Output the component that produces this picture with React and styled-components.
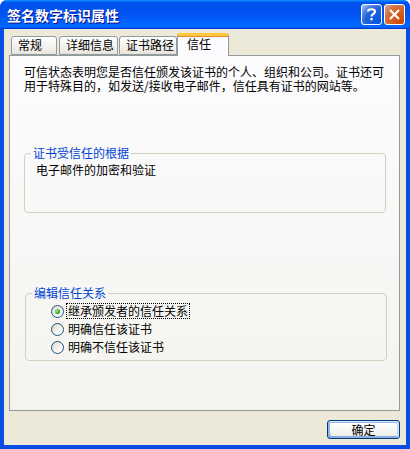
import React from "react";
import styled, { createGlobalStyle } from "styled-components";

const GlobalStyle = createGlobalStyle`
  html, body {
    margin: 0;
    padding: 0;
    background: #ffffff;
  }
  body {
    font-family: "Noto Sans CJK SC", "Liberation Sans", sans-serif;
    font-size: 12px;
  }
`;

const Window = styled.div`
  width: 410px;
  height: 449px;
  display: flex;
  flex-direction: column;
  box-sizing: border-box;
  background: #0a4fe4;
  border-radius: 7px 7px 0 0;
  overflow: hidden;
`;

const TitleBar = styled.div`
  height: 29px;
  flex: none;
  display: flex;
  align-items: center;
  padding: 0 5px 0 7px;
  background: linear-gradient(
    180deg,
    #0997ff,
    #0053ee 8%,
    #0050ee 40%,
    #0066ff 88%,
    #0066ff 93%,
    #005bff 95%,
    #003dd7 96%,
    #003dd7
  );
`;

const Title = styled.div`
  flex: 1;
  color: #ffffff;
  font-size: 14px;
  font-weight: 700;
  line-height: 16px;
  text-shadow: 1px 1px 0 #0f1089;
`;

const CaptionButton = styled.div`
  width: 21px;
  height: 21px;
  box-sizing: border-box;
  margin-left: 2px;
  border: 1px solid #ffffff;
  border-radius: 3px;
  display: flex;
  align-items: center;
  justify-content: center;
  background: ${({ $red }) =>
    $red
      ? "radial-gradient(circle at 90% 90%, #cc4600 0%, #dc6527 55%, #cd7546 70%, #e5a083 95%)"
      : "radial-gradient(circle at 90% 90%, #0054e9 0%, #2263d5 55%, #4479e4 70%, #a3bbec 95%)"};
`;

const Body = styled.div`
  flex: 1;
  margin: 0 4px 4px;
  background: #ece9d8;
  display: flex;
  flex-direction: column;
  padding: 4px 6px 0 5px;
`;

const TabRow = styled.div`
  height: 22px;
  display: flex;
  align-items: flex-end;
  padding-left: 2px;
  position: relative;
  z-index: 1;
`;

const Tab = styled.div`
  width: ${({ $w }) => $w}px;
  height: ${({ $active }) => ($active ? 23 : 19)}px;
  margin-right: ${({ $gap }) => $gap}px;
  margin-bottom: ${({ $active }) => ($active ? -1 : 0)}px;
  box-sizing: border-box;
  border: 1px solid #919b9c;
  border-bottom: ${({ $active }) => ($active ? "none" : "1px solid #919b9c")};
  border-top: ${({ $active }) =>
    $active ? "3px solid #ffc83c" : "1px solid #919b9c"};
  border-radius: 3px 3px 0 0;
  background: ${({ $active }) =>
    $active ? "#fcfcfe" : "linear-gradient(180deg, #ffffff, #f2f1ec 60%, #e6e4dc)"};
  padding-left: ${({ $active }) => ($active ? 9 : 6)}px;
  font-size: 12px;
  line-height: 16px;
  color: #000000;
  box-shadow: ${({ $active }) => ($active ? "inset 0 1px 0 #e68b2c" : "none")};
`;

const Panel = styled.div`
  height: 356px;
  box-sizing: border-box;
  border: 1px solid #919b9c;
  background: linear-gradient(180deg, #fcfcfe, #f4f3ee);
  padding: 9px 0 0 14px;
  display: flex;
  flex-direction: column;
`;

const Para = styled.p`
  margin: 0;
  width: 365px;
  line-height: 14px;
  font-size: 12px;
  color: #000000;
`;

const Group = styled.fieldset`
  margin: ${({ $top }) => $top}px 0 0 ${({ $left }) => $left}px;
  width: 362px;
  height: ${({ $h }) => $h}px;
  box-sizing: border-box;
  border: 1px solid #d0d0bf;
  border-radius: 4px;
  padding: 0 0 0 ${({ $pad }) => $pad}px;
  min-width: 0;
`;

const Legend = styled.legend`
  margin-left: -${({ $pad }) => $pad - 6}px;
  padding: 0 2px;
  color: #0046d5;
  font-size: 12px;
  line-height: 14px;
`;

const GroupText = styled.div`
  margin-top: 3px;
  line-height: 14px;
  color: #000000;
`;

const RadioList = styled.div`
  display: flex;
  flex-direction: column;
  margin-top: 2px;
`;

const RadioRow = styled.div`
  height: 18px;
  display: flex;
  align-items: center;
`;

const RadioCircle = styled.span`
  width: 13px;
  height: 13px;
  box-sizing: border-box;
  border-radius: 50%;
  border: 1px solid #1c5180;
  background: linear-gradient(135deg, #dcd9c8, #ffffff 80%);
  display: flex;
  align-items: center;
  justify-content: center;
  flex: none;
`;

const RadioDot = styled.span`
  width: 5px;
  height: 5px;
  border-radius: 50%;
  background: radial-gradient(circle at 35% 35%, #9ee39e, #21a121 70%);
`;

const RadioLabel = styled.span`
  margin-left: 3px;
  padding: 0 1px;
  line-height: 14px;
  color: #000000;
  outline: ${({ $focus }) => ($focus ? "1px dotted #000000" : "none")};
`;

const Footer = styled.div`
  display: flex;
  justify-content: flex-end;
  padding-top: 9px;
`;

const Button = styled.div`
  width: 73px;
  height: 19px;
  box-sizing: border-box;
  border: 1px solid #003c74;
  border-radius: 3px;
  background: linear-gradient(180deg, #ffffff, #f0f0ea 85%, #d6d0c5);
  box-shadow: inset -1px 1px #cee7ff, inset 1px 2px #98b8ea, inset -2px 2px #bcd4f6,
    inset 1px -1px #89ade4, inset 2px -2px #89ade4;
  display: flex;
  align-items: center;
  justify-content: center;
  font-size: 12px;
  line-height: 14px;
  color: #000000;
`;

const HelpIcon = () => (
  <svg width="13" height="15" viewBox="0 0 13 15">
    <path
      d="M3 4.5 C3 1.5 10 1.5 10 4.5 C10 7 6.5 7 6.5 9.5"
      fill="none"
      stroke="#ffffff"
      strokeWidth="2.2"
    />
    <rect x="5.4" y="11" width="2.3" height="2.3" fill="#ffffff" />
  </svg>
);

const CloseIcon = () => (
  <svg width="13" height="13" viewBox="0 0 13 13">
    <path d="M2 2 L11 11 M11 2 L2 11" stroke="#ffffff" strokeWidth="2.2" />
  </svg>
);

const tabs = [
  { label: "常规", w: 46, gap: 2 },
  { label: "详细信息", w: 59, gap: 1 },
  { label: "证书路径", w: 58, gap: 0 },
  { label: "信任", w: 52, gap: 0, active: true },
];

const radios = [
  { label: "继承颁发者的信任关系", checked: true },
  { label: "明确信任该证书" },
  { label: "明确不信任该证书" },
];

export default function App() {
  return (
    <>
      <GlobalStyle />
      <Window>
        <TitleBar>
          <Title>签名数字标识属性</Title>
          <CaptionButton>
            <HelpIcon />
          </CaptionButton>
          <CaptionButton $red>
            <CloseIcon />
          </CaptionButton>
        </TitleBar>
        <Body>
          <TabRow>
            {tabs.map((t) => (
              <Tab key={t.label} $w={t.w} $gap={t.gap} $active={t.active}>
                {t.label}
              </Tab>
            ))}
          </TabRow>
          <Panel>
            <Para>
              可信状态表明您是否信任颁发该证书的个人、组织和公司。证书还可用于特殊目的，如发送/接收电子邮件，信任具有证书的网站等。
            </Para>
            <Group $top={53} $left={0} $h={67} $pad={11}>
              <Legend $pad={11}>证书受信任的根据</Legend>
              <GroupText>电子邮件的加密和验证</GroupText>
            </Group>
            <Group $top={73} $left={1} $h={75} $pad={25}>
              <Legend $pad={25}>编辑信任关系</Legend>
              <RadioList>
                {radios.map((r) => (
                  <RadioRow key={r.label}>
                    <RadioCircle>{r.checked && <RadioDot />}</RadioCircle>
                    <RadioLabel $focus={r.checked}>{r.label}</RadioLabel>
                  </RadioRow>
                ))}
              </RadioList>
            </Group>
          </Panel>
          <Footer>
            <Button>确定</Button>
          </Footer>
        </Body>
      </Window>
    </>
  );
}
